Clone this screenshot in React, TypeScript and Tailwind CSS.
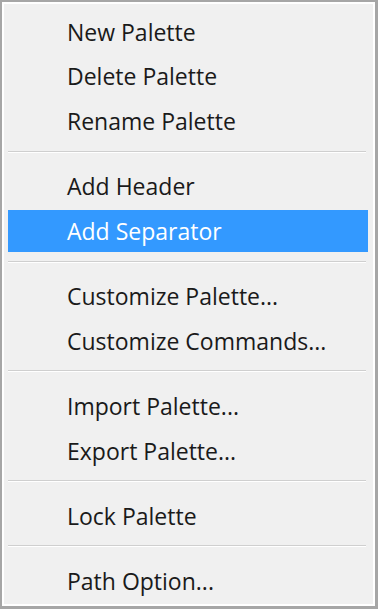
import React from 'react';

type Entry = { label: string; active?: boolean } | 'sep';

const entries: Entry[] = [
  { label: 'New Palette' },
  { label: 'Delete Palette' },
  { label: 'Rename Palette' },
  'sep',
  { label: 'Add Header' },
  { label: 'Add Separator', active: true },
  'sep',
  { label: 'Customize Palette...' },
  { label: 'Customize Commands...' },
  'sep',
  { label: 'Import Palette...' },
  { label: 'Export Palette...' },
  'sep',
  { label: 'Lock Palette' },
  'sep',
  { label: 'Path Option...' },
];

const App: React.FC = () => {
  return (
    <div className="w-[378px] h-[609px] flex border-l-2 border-t-2 border-r-[3px] border-b-[3px] border-[#a6a6a6]">
      <div
        className="flex-1 flex flex-col border-2 border-white bg-[#f0f0f0] pt-[6px] text-[23px] text-[#1a1a1a]"
        style={{ fontFamily: '"Open Sans", "Noto Sans", sans-serif' }}
      >
        {entries.map((e, i) =>
          e === 'sep' ? (
            <div key={i} className="h-[20px] ml-[4px] mr-[7px] pt-[6px]">
              <div className="h-px bg-[#cfcfcf]" />
              <div className="h-px bg-white" />
            </div>
          ) : (
            <div key={i} className="h-[45px] ml-[4px] mr-[5px]">
              <div
                className={`h-[42px] flex items-center pl-[59px] pt-[2px] leading-none ${
                  e.active ? 'bg-[#3399ff] text-white' : ''
                }`}
              >
                {e.label}
              </div>
            </div>
          )
        )}
      </div>
    </div>
  );
};

export default App;
